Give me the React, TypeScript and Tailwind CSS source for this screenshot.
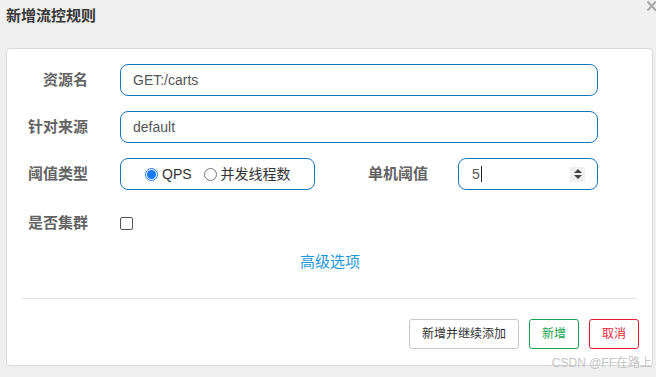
import React from 'react';

const FONT = "font-['Liberation_Sans','Noto_Sans_CJK_SC',sans-serif]";

function Label({ text, width }: { text: string; width: string }) {
  return (
    <div className={`${width} shrink-0 text-right text-[15px] font-bold leading-[20px] text-[#636363]`}>
      {text}
    </div>
  );
}

function TextInput({ value }: { value: string }) {
  return (
    <div className="flex h-[32px] w-[478px] items-center rounded-lg border border-[#1477bb] pl-[12px] text-[14px] text-[#555]">
      {value}
    </div>
  );
}

export default function App() {
  return (
    <div className={`relative h-[377px] w-[656px] overflow-hidden bg-[#efefef] ${FONT}`}>
      {/* Header */}
      <div className="flex h-[48px] items-start pl-[6px] pt-[6px]">
        <h3 className="text-[15px] font-bold leading-[20px] text-[#383838]">新增流控规则</h3>
      </div>
      <svg className="absolute right-0 top-0" width="10" height="13" viewBox="0 0 10 13">
        <path d="M1.5 1.5 L10 10.5 M10 1.5 L1.5 10.5" stroke="#a8a8a8" strokeWidth="2" />
      </svg>

      {/* Body panel */}
      <div className="ml-[6px] mr-[3px] h-[318px] rounded-[4px] border border-[#d9d9d9] bg-white pt-[15px]">
        <div className="flex items-center">
          <Label text="资源名" width="w-[81px]" />
          <div className="ml-[32px]">
            <TextInput value="GET:/carts" />
          </div>
        </div>
        <div className="mt-[15px] flex items-center">
          <Label text="针对来源" width="w-[81px]" />
          <div className="ml-[32px]">
            <TextInput value="default" />
          </div>
        </div>
        <div className="mt-[15px] flex items-center">
          <Label text="阈值类型" width="w-[81px]" />
          <div className="ml-[32px] flex h-[32px] w-[195px] items-center rounded-lg border border-[#1477bb] pl-[24px] text-[14px] text-[#333]">
            <span className="flex h-[13px] w-[13px] items-center justify-center rounded-full border border-[#1677ff] bg-white">
              <span className="h-[9px] w-[9px] rounded-full bg-[#1677ff]" />
            </span>
            <span className="ml-[4px]">QPS</span>
            <span className="ml-[12px] h-[13px] w-[13px] rounded-full border border-[#767676] bg-white" />
            <span className="ml-[4px]">并发线程数</span>
          </div>
          <Label text="单机阈值" width="w-[113px]" />
          <div className="ml-[30px] flex h-[32px] w-[140px] items-center rounded-lg border border-[#1477bb] pl-[13px] pr-[12px] text-[14px] text-[#555]">
            <span>5</span>
            <span className="ml-[1px] h-[16px] w-px bg-[#222]" />
            <span className="ml-auto flex h-[15px] w-[15px] flex-col items-center justify-center gap-[2px] bg-[#efefef]">
              <svg width="8" height="4" viewBox="0 0 8 4"><path d="M0 4 L4 0 L8 4 Z" fill="#444" /></svg>
              <svg width="8" height="4" viewBox="0 0 8 4"><path d="M0 0 L4 4 L8 0 Z" fill="#444" /></svg>
            </span>
          </div>
        </div>
        <div className="mt-[17px] flex h-[32px] items-center">
          <Label text="是否集群" width="w-[81px]" />
          <span className="ml-[32px] h-[13px] w-[13px] rounded-[2px] border border-[#555] bg-white" />
        </div>
        <div className="mt-[13px] text-center text-[15px] leading-[20px] text-[#1a97d8]">
          <span className="ml-[1px]">高级选项</span>
        </div>
        <div className="mx-[15px] mt-[26px] h-px bg-[#e3e3e3]" />
        <div className="mr-[13px] mt-[20px] flex justify-end gap-[10px] text-[12px]">
          <button className="h-[30px] w-[110px] rounded-[3px] border border-[#c8c8c8] bg-white text-[#333]">新增并继续添加</button>
          <button className="h-[30px] w-[50px] rounded-[3px] border border-[#14a44d] bg-white text-[#14a44d]">新增</button>
          <button className="h-[30px] w-[50px] rounded-[3px] border border-[#e81c35] bg-white text-[#e81c35]">取消</button>
        </div>
      </div>

      <div className="absolute bottom-[6px] right-[4px] text-[12px] leading-[15px] text-[#c4c4c4]">CSDN @FF在路上</div>
    </div>
  );
}
